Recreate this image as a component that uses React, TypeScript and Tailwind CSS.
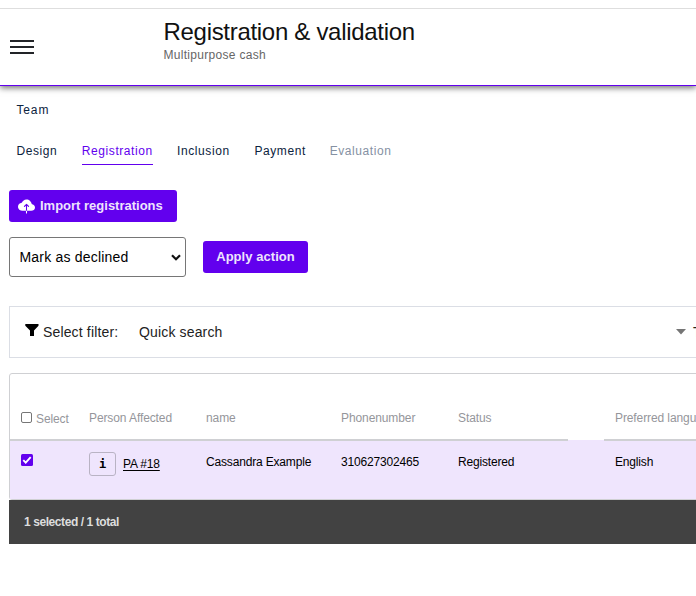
import React from "react";
import { IoCloudUpload } from "react-icons/io5";

const tabs = [
  { label: "Design", style: "w-[41px] text-[#0c2340]" },
  { label: "Registration", style: "w-[71px] border-b border-[#6200ee] text-[#6200ee]" },
  { label: "Inclusion", style: "w-[53px] text-[#0c2340]" },
  { label: "Payment", style: "w-[51px] text-[#0c2340]" },
  { label: "Evaluation", style: "w-[62px] text-[#8591a3]" },
];

function Header() {
  return (
    <header className="flex h-[78px] border-t border-b border-t-[#dedede] border-b-[#6200ee] shadow-[0_2px_6px_rgba(0,0,0,0.55)] [clip-path:inset(0_0_-12px_0)]">
      <button aria-label="Menu" className="mt-[31px] ml-[10px] flex h-[14px] w-[24px] flex-col justify-between">
        <span className="h-[2px] w-full bg-[#222428]" />
        <span className="h-[2px] w-full bg-[#222428]" />
        <span className="h-[2px] w-full bg-[#222428]" />
      </button>
      <div className="ml-[129.5px] pt-[9px] whitespace-nowrap">
        <h1 className="text-[24px] leading-[28px] tracking-[-0.3px] text-[#111]">Registration &amp; validation</h1>
        <p className="mt-px text-[12px] leading-[16px] tracking-[0.3px] text-[#666]">Multipurpose cash</p>
      </div>
    </header>
  );
}

function Tabs() {
  return (
    <nav className="pl-[16.5px] text-[12px] whitespace-nowrap">
      <div className="mt-[15px] h-[18px] leading-[18px] tracking-[0.85px] text-[#0c2340]">Team</div>
      <div className="mt-[23px] flex h-[23px] gap-x-[24.3px] tracking-[0.58px]">
        {tabs.map((t) => (
          <a key={t.label} className={"block leading-[18px] " + t.style}>{t.label}</a>
        ))}
      </div>
    </nav>
  );
}

function Filter() {
  return (
    <section className="mt-[29px] ml-[9px] flex h-[52px] items-center overflow-hidden border-y border-l border-[#dbdee5] text-[14px] tracking-[0.15px] whitespace-nowrap text-[#222]">
      <svg className="mb-[4px] ml-[15px] h-[12px] w-[14px] shrink-0" viewBox="0 0 14 12">
        <path d="M0.3 0h13.2v1.8L9 6.4V12H5V6.4L0.3 1.8z" fill="#000" />
      </svg>
      <span className="ml-[4px] w-[96px] shrink-0">Select filter:</span>
      <span className="w-[537px] shrink-0">Quick search</span>
      <svg className="h-[6px] w-[10px] shrink-0" viewBox="0 0 10 6"><path d="M0 0h10L5 5.5z" fill="#757575" /></svg>
      <span className="ml-[7px] shrink-0">T</span>
    </section>
  );
}

function Table() {
  return (
    <section className="mt-[15px] ml-[9px] overflow-hidden text-[12px] whitespace-nowrap">
      <div className="w-[800px] rounded-l-[3px] border border-[#cfd0d3]">
        <div className="flex h-[66px] tracking-[-0.1px] text-[#95969b]">
          <div className="flex h-full w-[558px] border-b border-[#cfd0d3] pt-[36px] leading-[16px]">
            <div className="ml-[11px] flex w-[68px] pt-px">
              <span className="mt-px mr-[4px] size-[11px] rounded-[2px] border border-[#767676] bg-white" />
              Select
            </div>
            <span className="w-[117px]">Person Affected</span>
            <span className="w-[135px]">name</span>
            <span className="w-[117px]">Phonenumber</span>
            <span>Status</span>
          </div>
          <div className="ml-[36px] h-full flex-1 border-b border-[#cfd0d3] pt-[36px] pl-[11px] leading-[16px]">Preferred language</div>
        </div>
        <div className="h-[59px] bg-[#efe5fd]">
          <div className="flex text-black">
            <div className="h-px w-[558px] bg-[#cfd0d3]" />
            <div className="ml-[36px] h-px flex-1 bg-[#cfd0d3]" />
          </div>
          <div className="flex pt-[13px] leading-[16px] tracking-[-0.17px] text-black">
            <svg className="mr-[56px] ml-[11px] size-[12px]" viewBox="0 0 12 12">
              <rect width="12" height="12" rx="1.5" fill="#6200ee" />
              <path d="M2.3 6.2l2.4 2.4 5-5.4" fill="none" stroke="#fff" strokeWidth="1.9" />
            </svg>
            <button className="-mt-[2px] flex h-[24px] w-[27px] items-center justify-center rounded-[3px] border border-[#b9b3c4] font-['DejaVu_Sans_Mono',monospace] text-[12px] font-bold">i</button>
            <a className="mt-[2px] ml-[7px] w-[83px]"><span className="underline underline-offset-2">PA #18</span></a>
            <span className="w-[135px]">Cassandra Example</span>
            <span className="w-[117px]">310627302465</span>
            <span className="w-[157px]">Registered</span>
            <span>English</span>
          </div>
        </div>
      </div>
      <footer className="h-[44px] bg-[#424242] pl-[15px] text-[12px] leading-[44px] font-bold tracking-[-0.42px] text-[#ddd]">1 selected / 1 total</footer>
    </section>
  );
}

export default function App() {
  return (
    <div className="h-[596px] w-[696px] overflow-hidden bg-white pt-[8px] font-['Liberation_Sans',Arial,sans-serif]">
      <Header />
      <Tabs />
      <div className="mt-[25px] ml-[9px]">
        <button className="flex h-[32px] w-[168px] items-center rounded-[3px] bg-[#6200ee] pl-[9px] text-[13px] font-bold whitespace-nowrap text-[#eee4fd]">
          <IoCloudUpload className="mr-[5px] size-[17px] text-white" />
          Import registrations
        </button>
        <div className="mt-[15px] flex h-[40px] items-center gap-[17px]">
          <button className="flex h-[40px] w-[177px] items-center justify-between rounded-[3px] border border-[#767676] pr-[4px] pl-[9.5px] text-[14px] tracking-[0.2px] text-black">
            Mark as declined
            <svg className="h-[7px] w-[10px]" viewBox="0 0 10 7"><path d="M1 1.2l4 4 4-4" fill="none" stroke="#111" strokeWidth="2.2" /></svg>
          </button>
          <button className="h-[32px] w-[105px] rounded-[3px] bg-[#6200ee] text-[13px] font-bold tracking-[0.05px] text-[#eee4fd]">Apply action</button>
        </div>
      </div>
      <Filter />
      <Table />
    </div>
  );
}
